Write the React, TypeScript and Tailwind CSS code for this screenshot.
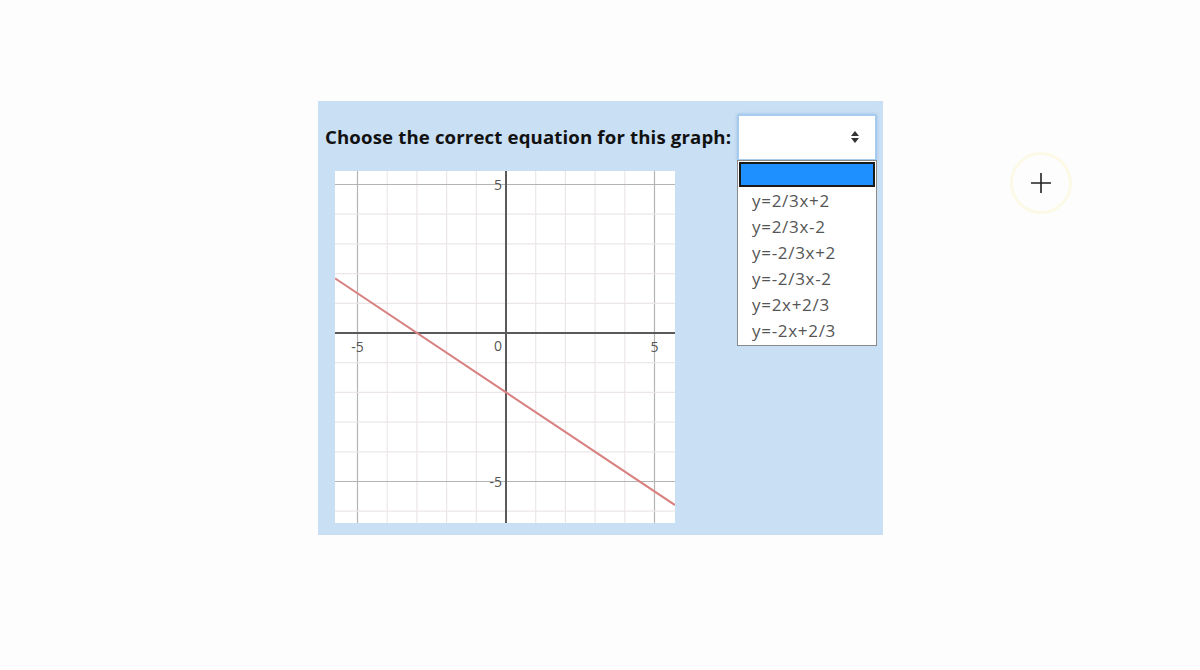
import React from "react";

const U = 29.7;
const OX = 171;
const OY = 162;
const W = 340;
const H = 352;

function Graph() {
  const vx: number[] = [];
  for (let k = -5; k <= 5; k++) vx.push(k);
  const hy: number[] = [];
  for (let k = -6; k <= 5; k++) hy.push(k);
  const f = (x: number) => (-2 / 3) * x - 2;
  const x0 = -OX / U;
  const x1 = (W - OX) / U;
  return (
    <svg width={W} height={H} viewBox={`0 0 ${W} ${H}`} className="block bg-white">
      {vx.map((k) => (
        <line
          key={"v" + k}
          x1={OX + k * U}
          x2={OX + k * U}
          y1={0}
          y2={H}
          stroke={k % 5 === 0 ? "#b4b4b4" : "#ece6ea"}
          strokeWidth={1.2}
        />
      ))}
      {hy.map((k) => (
        <line
          key={"h" + k}
          y1={OY - k * U}
          y2={OY - k * U}
          x1={0}
          x2={W}
          stroke={k % 5 === 0 ? "#b4b4b4" : "#ece6ea"}
          strokeWidth={1.2}
        />
      ))}
      <line x1={OX} x2={OX} y1={0} y2={H} stroke="#5a5a5a" strokeWidth={2} />
      <line x1={0} x2={W} y1={OY} y2={OY} stroke="#5a5a5a" strokeWidth={2} />
      <line
        x1={0}
        y1={OY - f(x0) * U}
        x2={W}
        y2={OY - f(x1) * U}
        stroke="#d98282"
        strokeWidth={2}
      />
      <g fontFamily="'Open Sans', sans-serif" fontSize="14" fill="#555">
        <text x={OX - 4} y={OY - 5 * U + 5} textAnchor="end">5</text>
        <text x={OX - 4} y={OY + 18} textAnchor="end">0</text>
        <text x={OX - 5 * U} y={OY + 19} textAnchor="middle">-5</text>
        <text x={OX + 5 * U} y={OY + 19} textAnchor="middle">5</text>
        <text x={OX - 4} y={OY + 5 * U + 5} textAnchor="end">-5</text>
      </g>
    </svg>
  );
}

const options = ["y=2/3x+2", "y=2/3x-2", "y=-2/3x+2", "y=-2/3x-2", "y=2x+2/3", "y=-2x+2/3"];

export default function App() {
  return (
    <div
      className="relative flex h-[670px] w-[1200px] items-start overflow-hidden bg-[#fdfdfd] pl-[318px] pt-[101px]"
      style={{ fontFamily: "'Open Sans', 'Noto Sans', sans-serif" }}
    >
      <div className="flex h-[434px] w-[565px] flex-col bg-[#c9dff3]">
        <div className="flex h-[70px] items-center justify-between pl-[7px] pr-[6px] pt-[2px]">
          <span className="text-[18.6px] font-bold tracking-[0.15px] text-[#111]">Choose the correct equation for this graph:</span>
          <div className="relative">
            <div className="flex h-[47px] w-[140px] items-center justify-end rounded-[2px] border-2 border-[#a6cbee] bg-white pr-[16px] shadow-[0_0_3px_rgba(120,170,220,0.6)]">
              <svg width="8" height="12" viewBox="0 0 8 12">
                <path d="M4 0 L8 5 L0 5 Z" fill="#333" />
                <path d="M4 12 L8 7 L0 7 Z" fill="#333" />
              </svg>
            </div>
            <div className="absolute left-0 top-[46px] z-10 w-[140px] border border-[#8a8a8a] bg-white">
              <div className="m-[1px] h-[25px] border-2 border-[#1a1a1a] bg-[#1e90ff]" />
              <div className="flex flex-col">
                {options.map((o) => (
                  <div key={o} className="h-[26.2px] pl-[14px] text-[17px] leading-[26px] tracking-[0.7px] text-[#555]">
                    {o}
                  </div>
                ))}
              </div>
            </div>
          </div>
        </div>
        <div className="pl-[17px]">
          <Graph />
        </div>
      </div>
      <div className="ml-[127px] mt-[51px] flex h-[62px] w-[62px] items-center justify-center rounded-full border-[3px] border-[#fcfae6]">
        <svg width="22" height="22" viewBox="0 0 22 22">
          <path d="M11 1 V21 M1 11 H21" stroke="#222" strokeWidth="1.6" />
        </svg>
      </div>
    </div>
  );
}
